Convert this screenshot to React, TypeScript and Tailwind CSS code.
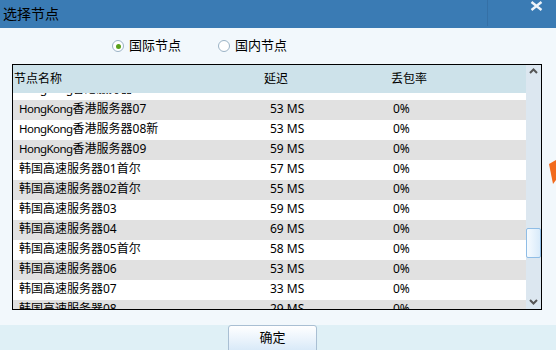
import React from "react";

const rows: [string, string, string][] = [
  ["HongKong香港服务器06", "56 MS", "0%"],
  ["HongKong香港服务器07", "53 MS", "0%"],
  ["HongKong香港服务器08新", "53 MS", "0%"],
  ["HongKong香港服务器09", "59 MS", "0%"],
  ["韩国高速服务器01首尔", "57 MS", "0%"],
  ["韩国高速服务器02首尔", "55 MS", "0%"],
  ["韩国高速服务器03", "59 MS", "0%"],
  ["韩国高速服务器04", "69 MS", "0%"],
  ["韩国高速服务器05首尔", "58 MS", "0%"],
  ["韩国高速服务器06", "53 MS", "0%"],
  ["韩国高速服务器07", "33 MS", "0%"],
  ["韩国高速服务器08", "29 MS", "0%"],
];

const font = { fontFamily: '"Noto Sans", "Noto Sans CJK SC", sans-serif' };

function Name({ text }: { text: string }) {
  const parts = text.split(/([A-Za-z]+)/).filter((p) => p.length > 0);
  return (
    <>
      {parts.map((p, i) =>
        /^[A-Za-z]+$/.test(p) ? (
          <span key={i} className="text-[11.5px] tracking-[-0.55px]">
            {p}
          </span>
        ) : (
          <span key={i}>{p}</span>
        )
      )}
    </>
  );
}

export default function App() {
  return (
    <div
      className="relative w-[556px] h-[350px] overflow-hidden bg-[#f2f8fc] flex flex-col text-black"
      style={font}
    >
      {/* title bar */}
      <div className="h-[28px] bg-[#3a7bb4] flex items-center pl-[3px] pb-[1px] relative shrink-0">
        <span className="text-[14px] leading-none">选择节点</span>
        <div className="absolute left-[487px] top-0 h-[26px] w-px bg-[#3570a6]" />
        <svg className="absolute left-[530px] top-[1px]" width="13" height="10" viewBox="0 0 13 10">
          <path d="M1.5 1 L11.5 9 M11.5 1 L1.5 9" stroke="#eef4fa" strokeWidth="2.4" />
        </svg>
      </div>

      {/* radio row */}
      <div className="h-[36px] shrink-0 flex items-center text-[13px]">
        <div className="ml-[112px] flex items-center">
          <span className="w-[12px] h-[12px] rounded-full border border-[#9bb3c6] bg-white flex items-center justify-center">
            <span className="w-[5px] h-[5px] rounded-full bg-[#5aa11a]" />
          </span>
          <span className="ml-[5px]">国际节点</span>
        </div>
        <div className="ml-[37px] flex items-center">
          <span className="w-[12px] h-[12px] rounded-full border border-[#9bb3c6] bg-white" />
          <span className="ml-[5px]">国内节点</span>
        </div>
      </div>

      {/* table */}
      <div className="ml-[12px] w-[530px] h-[246px] border border-black flex shrink-0 bg-white">
        <div className="flex-1 flex flex-col overflow-hidden">
          <div className="h-[28px] bg-[#cde2ea] flex items-center text-[12px] shrink-0 relative z-10">
            <span className="ml-[1px] w-[250px]">节点名称</span>
            <span className="w-[127px]">延迟</span>
            <span>丢包率</span>
          </div>
          <div className="flex-1 overflow-hidden relative">
            <div className="-mt-[13px]">
              {rows.map((r, i) => (
                <div
                  key={i}
                  className={`h-[20px] flex items-center pb-[2px] text-[12px] ${i % 2 === 1 ? "bg-[#e1e1e1]" : "bg-white"}`}
                >
                  <span className="ml-[6px] w-[251px]">
                    <Name text={r[0]} />
                  </span>
                  <span className="w-[123px]">{r[1]}</span>
                  <span>{r[2]}</span>
                </div>
              ))}
            </div>
          </div>
        </div>
        {/* scrollbar */}
        <div className="w-[15px] bg-[#dce7f0] flex flex-col items-center relative">
          <svg className="mt-[3px]" width="9" height="6" viewBox="0 0 9 6">
            <path d="M1 5 L4.5 1.5 L8 5" stroke="#555" strokeWidth="2" fill="none" />
          </svg>
          <div className="absolute top-[163px] left-0 w-[15px] h-[30px] rounded-[2px] border border-[#8fbde6] bg-gradient-to-r from-[#f6fbff] to-[#d9ebfa]" />
          <svg className="mt-auto mb-[4px]" width="9" height="6" viewBox="0 0 9 6">
            <path d="M1 1 L4.5 4.5 L8 1" stroke="#555" strokeWidth="2" fill="none" />
          </svg>
        </div>
      </div>

      <div className="h-[15px] shrink-0" />

      {/* footer */}
      <div className="flex-1 bg-[#dff0f6] flex items-start">
        <button className="ml-[228px] w-[89px] h-[30px] rounded-[3px] border border-[#a9bfd3] bg-gradient-to-b from-white to-[#d3e6f7] text-[13px] pb-[5px]">
          确定
        </button>
      </div>

      {/* orange fragment at right edge */}
      <svg className="absolute left-[546px] top-[158px]" width="10" height="30" viewBox="0 0 10 30">
        <polygon points="3,6 10,2 10,22 7,26" fill="#f26b1d" />
      </svg>
    </div>
  );
}
